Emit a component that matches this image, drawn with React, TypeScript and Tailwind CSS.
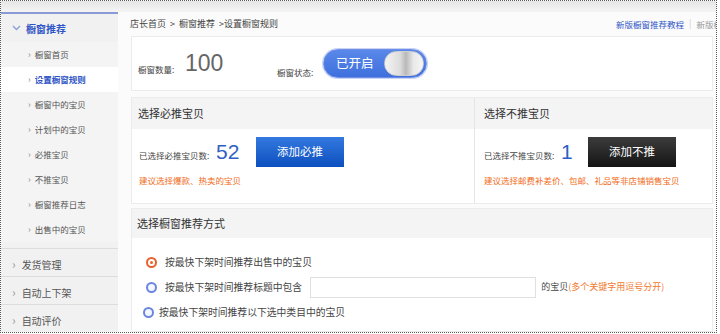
import React from "react";

const F = { fontFamily: '"Noto Sans CJK SC", "Liberation Sans", sans-serif' };
const A = { fontFamily: '"Liberation Sans", sans-serif' };

function Radio({ checked }: { checked?: boolean }) {
  return checked ? (
    <span className="w-[11px] h-[11px] rounded-full border-2 border-[#e8612c] bg-white flex items-center justify-center shrink-0">
      <span className="w-[3px] h-[3px] rounded-full bg-[#e8612c]" />
    </span>
  ) : (
    <span className="w-[11px] h-[11px] rounded-full border-2 border-[#6d85e0] bg-[#f4f7ff] shrink-0" />
  );
}

export default function App() {
  const items = ["橱窗首页", "设置橱窗规则", "橱窗中的宝贝", "计划中的宝贝", "必推宝贝", "不推宝贝", "橱窗推荐日志", "出售中的宝贝"];
  return (
    <div className="w-[720px] h-[334px] bg-white" style={F}>
      <div className="w-[717px] h-[333px] border border-dotted border-[#555] flex flex-col overflow-hidden">
        <div className="h-[11px] shrink-0 bg-[linear-gradient(#e6e6e6,#f4f4f4)]" />
        <div className="flex flex-1 min-h-0">
          {/* sidebar */}
          <div className="w-[117px] shrink-0 bg-[#f1f1f1] border-t-2 border-[#8a9ad6] flex flex-col">
            <div className="h-[28px] flex items-center pl-[11px] gap-[5px]">
              <svg width="9" height="6" viewBox="0 0 9 6"><path d="M1 1 L4.5 4.5 L8 1" fill="none" stroke="#8aa0d8" strokeWidth="1.4" /></svg>
              <span className="text-[10px] font-bold text-[#2f55c6]">橱窗推荐</span>
            </div>
            <div className="flex flex-col pb-[6px]">
              {items.map((t, i) => (
                <div key={t} className={`h-[25px] flex items-center pl-[27px] gap-[4px] ${i === 1 ? "bg-white" : "bg-[#f4f4f4]"}`}>
                  <span className="text-[9px] text-[#888] leading-none">›</span>
                  <span className={`text-[8.5px] ${i === 1 ? "text-[#2f55c6] font-bold" : "text-[#555]"}`}>{t}</span>
                </div>
              ))}
            </div>
            {["发货管理", "自动上下架", "自动评价"].map((t) => (
              <div key={t} className="h-[28px] shrink-0 border-t border-[#dcdcdc] flex items-center pl-[11px] gap-[6px] pt-[3px]">
                <span className="text-[12px] text-[#999] leading-none">›</span>
                <span className="text-[10px] text-[#555]">{t}</span>
              </div>
            ))}
          </div>
          {/* main */}
          <div className="flex-1 min-w-0 bg-[#fbfbfb] flex flex-col pl-[13px] pr-[3px]">
            <div className="h-[24px] shrink-0 flex items-center justify-between">
              <span className="text-[9px] text-[#444] -ml-[1px] whitespace-pre">店长首页  &gt;  橱窗推荐  &gt;设置橱窗规则</span>
              <div className="flex items-center gap-[5px] whitespace-nowrap overflow-hidden w-[100px] -mr-[3px]">
                <span className="text-[8.5px] text-[#2f55c6]">新版橱窗推荐教程</span>
                <span className="text-[9px] text-[#ccc]">|</span>
                <span className="text-[8.5px] text-[#999]">新版橱窗</span>
              </div>
            </div>
            {/* card 1 */}
            <div className="h-[55px] shrink-0 bg-white border border-[#ececec] flex items-center pl-[6px]">
              <span className="text-[8.5px] text-[#444] mt-[11px] w-[47px]">橱窗数量:</span>
              <span className="text-[23px] text-[#666] -mt-[1px] w-[92px]" style={A}>100</span>
              <span className="text-[8.5px] text-[#444] mt-[18px] w-[46px]">橱窗状态:</span>
              <div className="w-[104px] h-[29px] rounded-full bg-[linear-gradient(#5a88ea,#3e6fdc)] border border-[#6e8ee8] ring-1 ring-[#c9d4f5] flex items-center pl-[12px] pr-[2px] justify-between">
                <span className="text-[12.5px] text-white">已开启</span>
                <span className="w-[40px] h-[25px] rounded-full bg-[linear-gradient(90deg,#f4f4f4,#dcdcdc_40%,#b9b9b9_55%,#e9e9e9_75%,#f6f6f6)] border border-[#cfcfcf]" />
              </div>
            </div>
            {/* card 2 */}
            <div className="h-[107px] shrink-0 mt-[6px] bg-white border border-[#ececec] flex">
              <div className="w-[343px] flex flex-col border-r border-[#e6e6e6]">
                <div className="h-[31px] bg-[#f4f4f4] flex items-center pl-[6px]">
                  <span className="text-[11px] text-[#333]">选择必推宝贝</span>
                </div>
                <div className="flex-1 pl-[7px] pt-[7px] flex flex-col">
                  <div className="flex items-center">
                    <span className="text-[8.5px] text-[#444] mt-[8px] w-[77px]">已选择必推宝贝数:</span>
                    <span className="text-[21px] text-[#2f5fc4] w-[40px]" style={A}>52</span>
                    <div className="w-[88px] h-[30px] bg-[linear-gradient(#3479df,#0c4fbf)] flex items-center justify-center">
                      <span className="text-[11.5px] text-white">添加必推</span>
                    </div>
                  </div>
                  <span className="text-[8.5px] text-[#f06a16] mt-[6px]">建议选择爆款、热卖的宝贝</span>
                </div>
              </div>
              <div className="flex-1 flex flex-col">
                <div className="h-[31px] bg-[#f4f4f4] flex items-center pl-[9px]">
                  <span className="text-[11px] text-[#333]">选择不推宝贝</span>
                </div>
                <div className="flex-1 pl-[9px] pt-[7px] flex flex-col">
                  <div className="flex items-center">
                    <span className="text-[8.5px] text-[#444] mt-[8px] w-[77px]">已选择不推宝贝数:</span>
                    <span className="text-[21px] text-[#2f5fc4] w-[27px]" style={A}>1</span>
                    <div className="w-[88px] h-[30px] bg-[linear-gradient(#3c3c3c,#141414)] flex items-center justify-center">
                      <span className="text-[11.5px] text-white">添加不推</span>
                    </div>
                  </div>
                  <span className="text-[8.5px] text-[#f06a16] mt-[6px] whitespace-nowrap">建议选择邮费补差价、包邮、礼品等非店铺销售宝贝</span>
                </div>
              </div>
            </div>
            {/* card 3 */}
            <div className="flex-1 mt-[4px] bg-white border border-[#ececec] flex flex-col">
              <div className="h-[29px] shrink-0 bg-[#f4f4f4] flex items-center pl-[5px]">
                <span className="text-[11px] text-[#333]">选择橱窗推荐方式</span>
              </div>
              <div className="flex flex-col pl-[14px] pt-[14px] gap-[4px]">
                <div className="flex items-center gap-[8px] h-[20px]">
                  <Radio checked />
                  <span className="text-[9.8px] text-[#444]">按最快下架时间推荐出售中的宝贝</span>
                </div>
                <div className="flex items-center gap-[8px] h-[22px]">
                  <Radio />
                  <span className="text-[9.8px] text-[#444]">按最快下架时间推荐标题中包含</span>
                  <span className="w-[226px] h-[21px] border border-[#e0e0e0] bg-white" />
                  <span className="text-[9px] text-[#444] -ml-[3px]">的宝贝<span className="text-[#f07a30]">(多个关键字用逗号分开)</span></span>
                </div>
                <div className="flex items-center gap-[5px] h-[20px] -ml-[3px]">
                  <Radio />
                  <span className="text-[9.8px] text-[#444]">按最快下架时间推荐以下选中类目中的宝贝</span>
                </div>
              </div>
            </div>
          </div>
        </div>
      </div>
    </div>
  );
}
